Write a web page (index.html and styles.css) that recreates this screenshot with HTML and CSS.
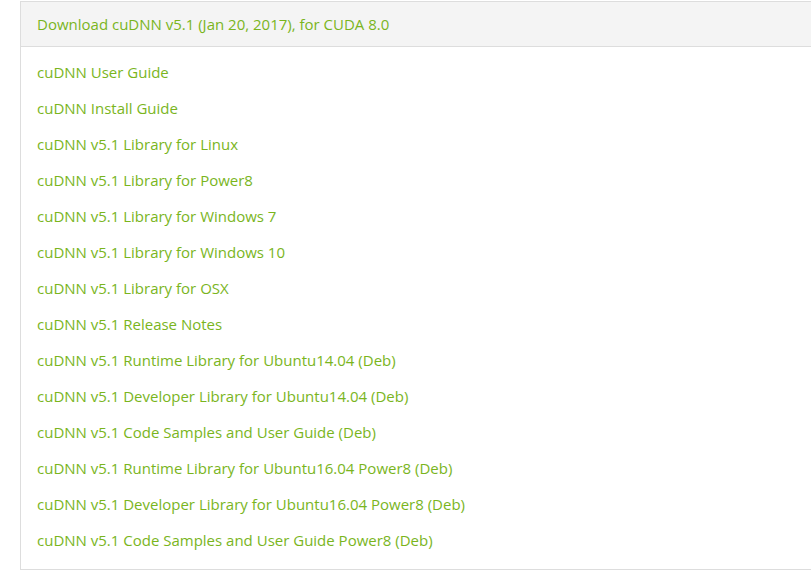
FILE: index.html
```html
<!DOCTYPE html>
<html>
<head>
<meta charset="utf-8">
<link rel="stylesheet" href="styles.css">
</head>
<body>
<div class="panel">
  <div class="panel-heading">Download cuDNN v5.1 (Jan 20, 2017), for CUDA 8.0</div>
  <ul class="links">
    <li><a href="#">cuDNN User Guide</a></li>
    <li><a href="#">cuDNN Install Guide</a></li>
    <li><a href="#">cuDNN v5.1 Library for Linux</a></li>
    <li><a href="#">cuDNN v5.1 Library for Power8</a></li>
    <li><a href="#">cuDNN v5.1 Library for Windows 7</a></li>
    <li><a href="#">cuDNN v5.1 Library for Windows 10</a></li>
    <li><a href="#">cuDNN v5.1 Library for OSX</a></li>
    <li><a href="#">cuDNN v5.1 Release Notes</a></li>
    <li><a href="#">cuDNN v5.1 Runtime Library for Ubuntu14.04 (Deb)</a></li>
    <li><a href="#">cuDNN v5.1 Developer Library for Ubuntu14.04 (Deb)</a></li>
    <li><a href="#">cuDNN v5.1 Code Samples and User Guide (Deb)</a></li>
    <li><a href="#">cuDNN v5.1 Runtime Library for Ubuntu16.04 Power8 (Deb)</a></li>
    <li><a href="#">cuDNN v5.1 Developer Library for Ubuntu16.04 Power8 (Deb)</a></li>
    <li><a href="#">cuDNN v5.1 Code Samples and User Guide Power8 (Deb)</a></li>
  </ul>
</div>
</body>
</html>
```
FILE: styles.css
```css
html, body {
  margin: 0;
  padding: 0;
  background: #fff;
  overflow: hidden;
}
body {
  font-family: "Open Sans", "Liberation Sans", sans-serif;
  font-size: 15px;
  color: #7ab51d;
}
.panel {
  margin: 1px 0 0 20px;
  width: 820px;
  border: 1px solid #dddddd;
  box-sizing: border-box;
}
.panel-heading {
  background: #f4f4f4;
  border-bottom: 1px solid #dddddd;
  height: 44px;
  line-height: 44px;
  padding: 0 16px;
}
.links {
  list-style: none;
  margin: 0;
  padding: 7px 16px 11px;
}
.links li {
  height: 36px;
  line-height: 36px;
}
.links a {
  color: #7ab51d;
  text-decoration: none;
}
```
